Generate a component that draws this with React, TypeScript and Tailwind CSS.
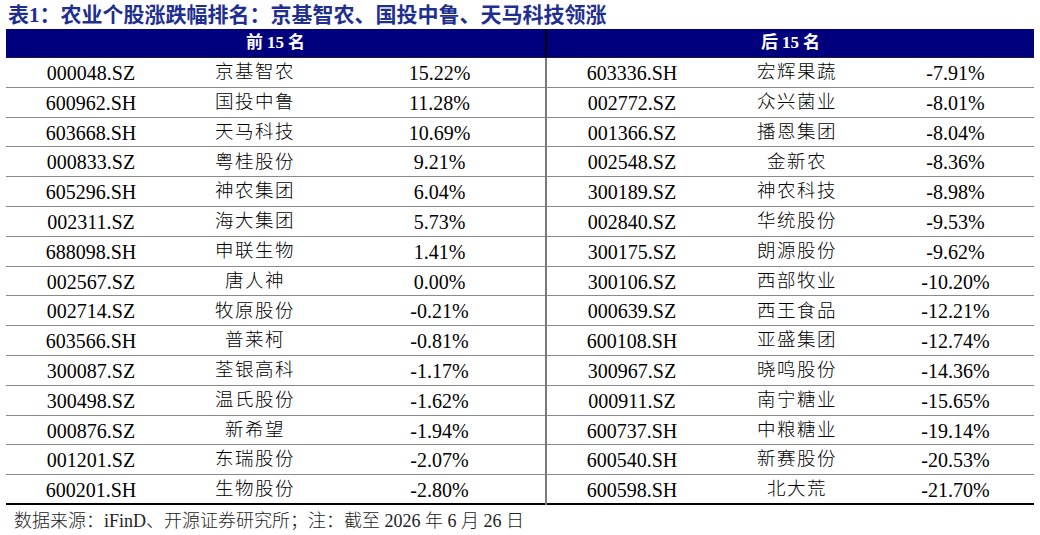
const top15 = [
  ["000048.SZ", "京基智农", "15.22%"],
  ["600962.SH", "国投中鲁", "11.28%"],
  ["603668.SH", "天马科技", "10.69%"],
  ["000833.SZ", "粤桂股份", "9.21%"],
  ["605296.SH", "神农集团", "6.04%"],
  ["002311.SZ", "海大集团", "5.73%"],
  ["688098.SH", "申联生物", "1.41%"],
  ["002567.SZ", "唐人神", "0.00%"],
  ["002714.SZ", "牧原股份", "-0.21%"],
  ["603566.SH", "普莱柯", "-0.81%"],
  ["300087.SZ", "荃银高科", "-1.17%"],
  ["300498.SZ", "温氏股份", "-1.62%"],
  ["000876.SZ", "新希望", "-1.94%"],
  ["001201.SZ", "东瑞股份", "-2.07%"],
  ["600201.SH", "生物股份", "-2.80%"],
];

const bottom15 = [
  ["603336.SH", "宏辉果蔬", "-7.91%"],
  ["002772.SZ", "众兴菌业", "-8.01%"],
  ["001366.SZ", "播恩集团", "-8.04%"],
  ["002548.SZ", "金新农", "-8.36%"],
  ["300189.SZ", "神农科技", "-8.98%"],
  ["002840.SZ", "华统股份", "-9.53%"],
  ["300175.SZ", "朗源股份", "-9.62%"],
  ["300106.SZ", "西部牧业", "-10.20%"],
  ["000639.SZ", "西王食品", "-12.21%"],
  ["600108.SH", "亚盛集团", "-12.74%"],
  ["300967.SZ", "晓鸣股份", "-14.36%"],
  ["000911.SZ", "南宁糖业", "-15.65%"],
  ["600737.SH", "中粮糖业", "-19.14%"],
  ["600540.SH", "新赛股份", "-20.53%"],
  ["600598.SH", "北大荒", "-21.70%"],
];

const serif = "font-['Liberation_Serif','Noto_Sans_CJK_SC',serif]";

export default function App() {
  return (
    <div className={`w-[1040px] h-[535px] bg-white overflow-hidden ${serif}`}>
      {/* Title */}
      <h1 className="pl-[8px] pt-[3px] h-[29px] text-[21px] leading-[24px] font-bold text-[#1f2f8f] whitespace-nowrap">
        表1：农业个股涨跌幅排名：京基智农、国投中鲁、天马科技领涨
      </h1>

      <div className="ml-[6px] w-[1028px]">
        {/* Header bar */}
        <div className="grid grid-cols-[541px_1fr] h-[29px] bg-[#00007f] border-b border-[#1a1a40] text-white font-bold text-[17px]">
          <div className="flex items-center justify-center gap-[4px] border-r-2 border-black">
            <span>前</span><span>15</span><span>名</span>
          </div>
          <div className="flex items-center justify-center gap-[4px]">
            <span>后</span><span>15</span><span>名</span>
          </div>
        </div>

        {/* Rows */}
        {top15.map((left, i) => {
          const right = bottom15[i];
          const last = i === top15.length - 1;
          return (
            <div
              key={left[0]}
              className={`grid grid-cols-[170px_158px_213px_170px_160px_1fr] h-[29.8px] text-[20px] text-black ${
                last ? "border-b-2 border-black" : "border-b-[1.5px] border-[#8a8a8a]"
              }`}
            >
              <div className="flex items-center justify-center">{left[0]}</div>
              <div className="flex items-center justify-center text-[18.5px] font-light tracking-[1.5px]">{left[1]}</div>
              <div className="flex items-center justify-center border-r-2 border-[#7a7a7a]">{left[2]}</div>
              <div className="flex items-center justify-center">{right[0]}</div>
              <div className="flex items-center justify-center text-[18.5px] font-light tracking-[1.5px]">{right[1]}</div>
              <div className="flex items-center justify-center">{right[2]}</div>
            </div>
          );
        })}
      </div>

      {/* Source note */}
      <p className="pl-[14px] pt-[5px] text-[18px] leading-[22px] font-light text-[#222] whitespace-nowrap">
        数据来源：iFinD、开源证券研究所；注：截至 2026 年 6 月 26 日
      </p>
    </div>
  );
}
